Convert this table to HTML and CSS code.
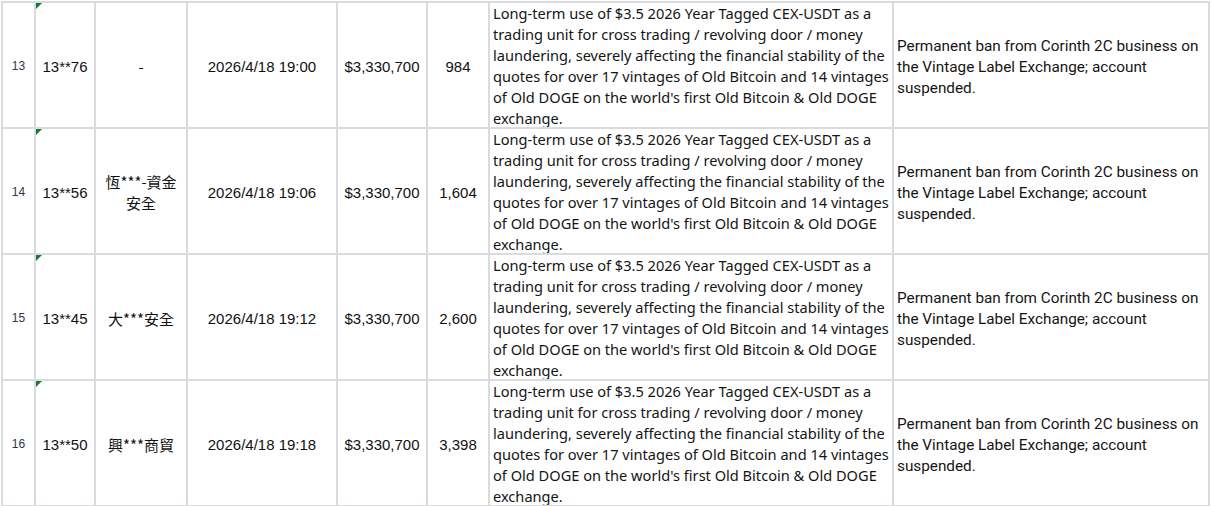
FILE: index.html
```html
<!DOCTYPE html>
<html lang="en">
<head>
<meta charset="utf-8">
<title>Sheet</title>
<link rel="stylesheet" href="styles.css">
</head>
<body>
<div class="sheet">
  <div class="cell hdr">13</div>
  <div class="cell id flag">13**76</div>
  <div class="cell name">-</div>
  <div class="cell num">2026/4/18 19:00</div>
  <div class="cell num">$3,330,700</div>
  <div class="cell num">984</div>
  <div class="cell reason"><p>Long-term use of $3.5 2026 Year Tagged CEX-USDT as a trading unit for cross trading / revolving door / money laundering, severely affecting the financial stability of the quotes for over 17 vintages of Old Bitcoin and 14 vintages of Old DOGE on the world's first Old Bitcoin &amp; Old DOGE exchange.</p></div>
  <div class="cell penalty"><p>Permanent ban from Corinth 2C business on the Vintage Label Exchange; account suspended.</p></div>

  <div class="cell hdr">14</div>
  <div class="cell id flag">13**56</div>
  <div class="cell name">恆***-資金<br>安全</div>
  <div class="cell num">2026/4/18 19:06</div>
  <div class="cell num">$3,330,700</div>
  <div class="cell num">1,604</div>
  <div class="cell reason"><p>Long-term use of $3.5 2026 Year Tagged CEX-USDT as a trading unit for cross trading / revolving door / money laundering, severely affecting the financial stability of the quotes for over 17 vintages of Old Bitcoin and 14 vintages of Old DOGE on the world's first Old Bitcoin &amp; Old DOGE exchange.</p></div>
  <div class="cell penalty"><p>Permanent ban from Corinth 2C business on the Vintage Label Exchange; account suspended.</p></div>

  <div class="cell hdr">15</div>
  <div class="cell id flag">13**45</div>
  <div class="cell name">大***安全</div>
  <div class="cell num">2026/4/18 19:12</div>
  <div class="cell num">$3,330,700</div>
  <div class="cell num">2,600</div>
  <div class="cell reason"><p>Long-term use of $3.5 2026 Year Tagged CEX-USDT as a trading unit for cross trading / revolving door / money laundering, severely affecting the financial stability of the quotes for over 17 vintages of Old Bitcoin and 14 vintages of Old DOGE on the world's first Old Bitcoin &amp; Old DOGE exchange.</p></div>
  <div class="cell penalty"><p>Permanent ban from Corinth 2C business on the Vintage Label Exchange; account suspended.</p></div>

  <div class="cell hdr">16</div>
  <div class="cell id flag">13**50</div>
  <div class="cell name">興***商貿</div>
  <div class="cell num">2026/4/18 19:18</div>
  <div class="cell num">$3,330,700</div>
  <div class="cell num">3,398</div>
  <div class="cell reason"><p>Long-term use of $3.5 2026 Year Tagged CEX-USDT as a trading unit for cross trading / revolving door / money laundering, severely affecting the financial stability of the quotes for over 17 vintages of Old Bitcoin and 14 vintages of Old DOGE on the world's first Old Bitcoin &amp; Old DOGE exchange.</p></div>
  <div class="cell penalty"><p>Permanent ban from Corinth 2C business on the Vintage Label Exchange; account suspended.</p></div>
</div>
</body>
</html>
```

FILE: styles.css
```css
html, body {
  margin: 0;
  padding: 0;
  background: #ffffff;
  overflow: hidden;
}

.sheet {
  display: grid;
  grid-template-columns: 31px 58px 90px 148px 88px 60px 402px 314px;
  grid-auto-rows: 124px;
  gap: 2px;
  padding: 2px;
  margin: 1px 0 0 1px;
  width: fit-content;
  background: #dadbe0;
  font-family: "Liberation Sans", Arial, sans-serif;
  font-size: 15px;
  color: #111111;
}

.cell {
  position: relative;
  background: #ffffff;
  display: flex;
  align-items: center;
  justify-content: center;
  text-align: center;
  overflow: hidden;
  line-height: 21px;
  padding-top: 2px;
  box-sizing: border-box;
}

.cell p {
  margin: 0;
}

.hdr {
  font-size: 12px;
  color: #33334d;
}

.flag::before {
  content: "";
  position: absolute;
  top: 0;
  left: 0;
  width: 0;
  height: 0;
  border-top: 6px solid #157a2c;
  border-right: 6px solid transparent;
}

.name {
  font-family: "Noto Sans CJK TC", sans-serif;
  font-size: 15px;
}

.reason {
  justify-content: flex-start;
  text-align: left;
  padding: 2px 3px 0;
  font-family: "Noto Sans", sans-serif;
  font-size: 14.6px;
  color: #151515;
}

.penalty {
  justify-content: flex-start;
  text-align: left;
  padding: 4px 3px 0;
  font-family: Roboto, sans-serif;
  font-size: 15.3px;
  color: #151515;
}
```
